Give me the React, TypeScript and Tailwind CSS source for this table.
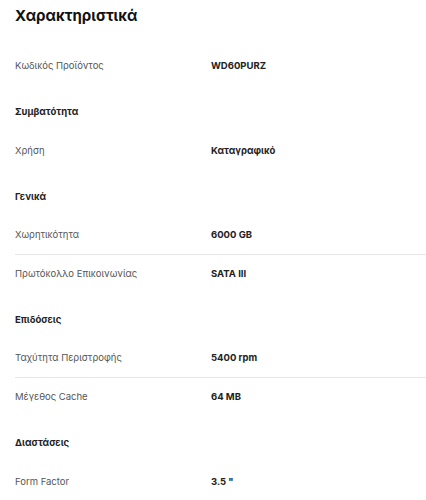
import React from "react";

type Row = { label: string; value: string };
type Section = { title?: string; rows: Row[] };

const sections: Section[] = [
  { rows: [{ label: "Κωδικός Προϊόντος", value: "WD60PURZ" }] },
  { title: "Συμβατότητα", rows: [{ label: "Χρήση", value: "Καταγραφικό" }] },
  {
    title: "Γενικά",
    rows: [
      { label: "Χωρητικότητα", value: "6000 GB" },
      { label: "Πρωτόκολλο Επικοινωνίας", value: "SATA III" },
    ],
  },
  {
    title: "Επιδόσεις",
    rows: [
      { label: "Ταχύτητα Περιστροφής", value: "5400 rpm" },
      { label: "Μέγεθος Cache", value: "64 MB" },
    ],
  },
  { title: "Διαστάσεις", rows: [{ label: "Form Factor", value: "3.5 \"" }] },
];

export default function App() {
  return (
    <div
      className="w-[426px] h-[500px] overflow-hidden bg-white pl-[15px]"
      style={{ fontFamily: "Inter, 'Noto Sans', sans-serif" }}
    >
      <h2 className="pt-[6px] h-[47px] text-[15px] leading-[20px] font-bold text-[#111]">
        Χαρακτηριστικά
      </h2>
      {sections.map((s, i) => (
        <div key={i}>
          {s.title && (
            <div className="pt-[20px] pb-[14px] text-[9.5px] leading-[13px] font-bold text-[#222]">
              {s.title}
            </div>
          )}
          {s.rows.map((r, j) => (
            <div
              key={j}
              className={
                "flex items-center h-[38px] " +
                (j < s.rows.length - 1 ? "border-b border-[#e6e6e6]" : "")
              }
            >
              <div className="w-[196px] text-[9.5px] text-[#555]">{r.label}</div>
              <div className="text-[9.5px] font-bold text-[#222]">{r.value}</div>
            </div>
          ))}
        </div>
      ))}
    </div>
  );
}
